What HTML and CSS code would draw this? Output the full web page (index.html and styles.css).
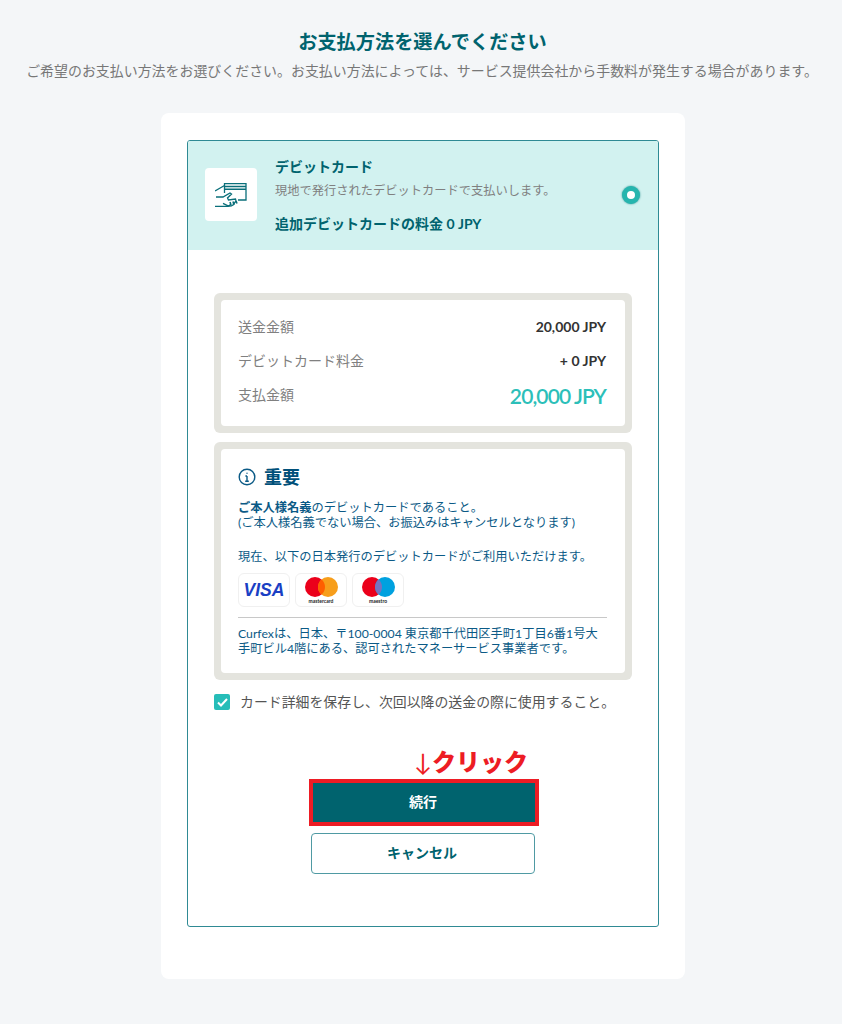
FILE: index.html
```html
<!DOCTYPE html>
<html lang="ja">
<head>
<meta charset="utf-8">
<title>お支払方法</title>
<link rel="stylesheet" href="styles.css">
</head>
<body>
<header class="head">
  <h1 class="title">お支払方法を選んでください</h1>
  <p class="sub">ご希望のお支払い方法をお選びください。お支払い方法によっては、サービス提供会社から手数料が発生する場合があります。</p>
</header>
<main class="card">
  <section class="option">
    <div class="opt-head">
      <div class="icon-box">
        <svg width="32" height="24" viewBox="0 0 32 24" fill="none" stroke="#0a6f7a" stroke-width="1.300">
          <path d="M9.500 10V.7h21.500V17H23"/>
          <path d="M9.500 3.400h21.500M9.500 6.200h21.500" stroke-width="1.500"/>
          <path d="M0 8l9.500-5.500M0 23.400h13l3-2"/>
          <path d="M1 14h7l7-4 1.500 1-4 4 1 2 7-1 .5 2-3 4c-2 1.500-4 1.500-6 .4l-4-2"/>
          <path d="M15 19l1 3M18 18.500l1 3.500M21 18l1 2.500" stroke-width="1.600"/>
        </svg>
      </div>
      <div class="opt-text">
        <div class="opt-name">デビットカード</div>
        <div class="opt-desc">現地で発行されたデビットカードで支払いします。</div>
        <div class="opt-fee">追加デビットカードの料金 0 JPY</div>
      </div>
      <span class="radio"></span>
    </div>
    <div class="opt-body">
      <div class="panel summary">
        <div class="panel-in sum-in">
          <div class="row"><span class="label">送金金額</span><b class="val">20,000 JPY</b></div>
          <div class="row"><span class="label">デビットカード料金</span><b class="val">+ 0 JPY</b></div>
          <div class="row total"><span class="label">支払金額</span><span class="big">20,000 JPY</span></div>
        </div>
      </div>
      <div class="panel notice">
        <div class="panel-in notice-in">
          <div class="notice-title">
            <svg width="18" height="18" viewBox="0 0 18 18" fill="none" stroke="#0b5a86" stroke-width="1.400"><circle cx="9" cy="9" r="7.800"/><path d="M9 8v5M7.200 13.200h3.600M7.400 8h1.600"/><circle cx="9" cy="5.200" r=".7" fill="#0b5a86" stroke="none"/></svg>
            <span>重要</span>
          </div>
          <p class="n-p"><b>ご本人様名義</b>のデビットカードであること。<br>(ご本人様名義でない場合、お振込みはキャンセルとなります)</p>
          <p class="n-p second">現在、以下の日本発行のデビットカードがご利用いただけます。</p>
          <div class="brands">
            <div class="brand"><span class="visa">VISA</span></div>
            <div class="brand">
              <svg width="33" height="20" viewBox="0 0 33 20"><circle cx="10" cy="10" r="10" fill="#eb001b"/><circle cx="23" cy="10" r="10" fill="#f79e1b"/><path d="M16.500 2.400a10 10 0 0 1 0 15.200a10 10 0 0 1 0-15.200z" fill="#ff5f00"/></svg>
              <span class="brand-name">mastercard</span>
            </div>
            <div class="brand">
              <svg width="33" height="20" viewBox="0 0 33 20"><circle cx="10" cy="10" r="10" fill="#eb001b"/><circle cx="23" cy="10" r="10" fill="#00a1df"/><path d="M16.500 2.400a10 10 0 0 1 0 15.200a10 10 0 0 1 0-15.200z" fill="#7673c0"/></svg>
              <span class="brand-name">maestro</span>
            </div>
          </div>
          <p class="legal">Curfexは、日本、〒100-0004 東京都千代田区手町1丁目6番1号大手町ビル4階にある、認可されたマネーサービス事業者です。</p>
        </div>
      </div>
      <label class="check">
        <span class="box"><svg width="11" height="9" viewBox="0 0 11 9" fill="none" stroke="#fff" stroke-width="2"><path d="M1 4.500l3 3 6-6.500"/></svg></span>
        <span>カード詳細を保存し、次回以降の送金の際に使用すること。</span>
      </label>
      <div class="hint"><span class="arrow">↓</span>クリック</div>
      <div class="btn primary">続行</div>
      <div class="btn ghost">キャンセル</div>
    </div>
  </section>
</main>
</body>
</html>
```
FILE: styles.css
```css
* { box-sizing: border-box; }
html, body { margin: 0; height: 1024px; overflow: hidden; }
body {
  background: #f4f6f8;
  font-family: Lato, "Noto Sans CJK JP", sans-serif;
  color: #333;
  display: flex;
  flex-direction: column;
  align-items: center;
}
.head { width: 100%; height: 113px; padding-top: 30px; text-align: center; }
.title { margin: 0; padding-left: 3px; font-size: 19.200px; line-height: 24px; font-weight: 700; color: #00636e; }
.sub { margin: 7px 0 0; padding-left: 2px; font-size: 13.950px; line-height: 20px; color: #777; white-space: nowrap; }
.card {
  width: 524px;
  height: 866px;
  margin-left: 4px;
  background: #fff;
  border-radius: 8px;
  padding: 27px 26px 0;
}
.option {
  height: 787px;
  border: 1px solid #2f8a94;
  border-radius: 3px;
  overflow: hidden;
}
.opt-head {
  height: 109px;
  background: #d2f2f0;
  display: flex;
  align-items: center;
  padding: 0 18px 0 17px;
}
.icon-box {
  width: 52px;
  height: 53px;
  flex: none;
  background: #fff;
  border-radius: 4px;
  display: flex;
  align-items: center;
  justify-content: center;
  margin-bottom: 2px;
}
.opt-text { flex: 1; margin-left: 18px; }
.opt-name { font-size: 14px; line-height: 20px; font-weight: 700; color: #00636e; }
.opt-desc { font-size: 12.250px; line-height: 18px; color: #808080; margin-top: 5px; }
.opt-fee { font-size: 14px; line-height: 20px; font-weight: 700; color: #00636e; margin-top: 14px; }
.radio {
  width: 18px;
  height: 18px;
  flex: none;
  border-radius: 50%;
  background: #fff;
  border: 5px solid #26b5ae;
  box-shadow: 0 0 2px #2a8f8f;
  margin-bottom: 2px;
}
.opt-body { padding: 43px 26px 0; }
.panel {
  padding: 7px;
  border-radius: 6px;
  background: #e4e4de;
}
.panel-in { height: 100%; background: #fff; border-radius: 4px; }
.summary { height: 140px; }
.sum-in { padding: 9px 19px 0 17px; }
.row {
  display: flex;
  justify-content: space-between;
  align-items: center;
  height: 34px;
}
.label { font-size: 14px; color: #808080; }
.val { font-size: 14px; font-weight: 700; color: #333; }
.total { align-items: flex-start; padding-top: 4px; }
.total .label { line-height: 22px; margin-top: 3px; }
.big { font-size: 21px; line-height: 30px; color: #2cbfb9; font-weight: 600; letter-spacing: -0.900px; }
.notice { height: 238px; margin-top: 9px; color: #0b5a86; }
.notice-in { padding: 16px 18px 0 17px; }
.notice-title {
  display: flex;
  align-items: center;
  gap: 8px;
  font-size: 18px;
  line-height: 24px;
  font-weight: 700;
  color: #00507a;
}
.n-p { margin: 11px 0 0; font-size: 12.250px; line-height: 15px; }
.second { margin-top: 19px; }
.brands { display: flex; gap: 5px; margin-top: 9px; }
.brand {
  width: 52px;
  height: 34px;
  border: 1px solid #f0f0f0;
  border-radius: 6px;
  display: flex;
  flex-direction: column;
  align-items: center;
  justify-content: center;
}
.visa {
  font-family: "Liberation Sans", sans-serif;
  font-size: 17.500px;
  font-weight: 700;
  font-style: italic;
  color: #1a3fc4;
}
.brand-name { font-size: 5px; line-height: 6px; font-weight: 700; color: #222; margin-top: 1px; }
.legal {
  margin: 10px 0 0;
  padding-top: 8px;
  border-top: 1px solid #c8c8c8;
  font-size: 12.250px;
  line-height: 15px;
}
.check {
  display: flex;
  align-items: center;
  gap: 10px;
  margin-top: 12px;
  font-size: 13.900px;
  line-height: 20px;
  color: #555;
}
.box {
  width: 16px;
  height: 16px;
  flex: none;
  background: #26bdb8;
  border-radius: 2px;
  display: flex;
  align-items: center;
  justify-content: center;
}
.hint {
  margin: 35px 0 2px 200px;
  font-size: 24px;
  line-height: 30px;
  font-weight: 900;
  color: #ed1c24;
  white-space: nowrap;
}
.arrow { font-weight: 400; }
.btn {
  margin-left: 97px;
  width: 224px;
  height: 41px;
  display: flex;
  align-items: center;
  justify-content: center;
  padding: 0 2px 3px 0;
  font-size: 14px;
  font-weight: 700;
  border-radius: 4px;
}
.primary {
  width: 230px;
  height: 47px;
  margin-left: 95px;
  background: #00636e;
  color: #fff;
  border: 4px solid #ed1c24;
  border-radius: 0;
}
.ghost {
  margin-top: 7px;
  background: #fff;
  color: #00636e;
  border: 1px solid #4f9aa3;
}
```
